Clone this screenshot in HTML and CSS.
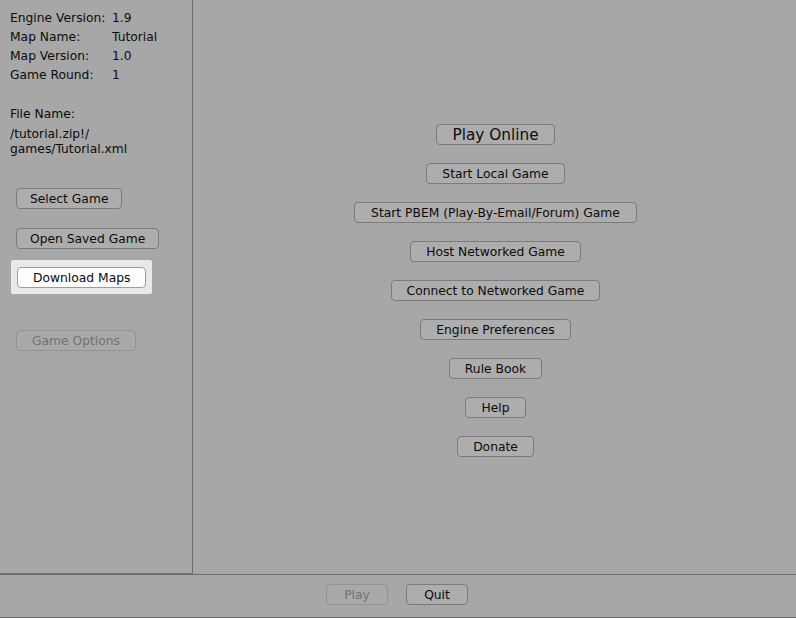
FILE: index.html
```html
<!DOCTYPE html>
<html>
<head>
<meta charset="utf-8">
<title>Game Launcher</title>
<link rel="stylesheet" href="styles.css">
</head>
<body>
<div class="window">
  <div class="top">
    <aside class="side">
      <div class="info">
        <span>Engine Version:</span><span>1.9</span>
        <span>Map Name:</span><span>Tutorial</span>
        <span>Map Version:</span><span>1.0</span>
        <span>Game Round:</span><span>1</span>
      </div>
      <div class="file-label">File Name:</div>
      <div class="file-path">/tutorial.zip!/<br>games/Tutorial.xml</div>
      <div class="side-buttons">
        <button class="btn btn-tight">Select Game</button>
        <button class="btn btn-tight">Open Saved Game</button>
        <div class="focus-ring"><button class="btn btn-default">Download Maps</button></div>
        <button class="btn btn-disabled">Game Options</button>
      </div>
    </aside>
    <main class="main">
      <button class="btn btn-large">Play Online</button>
      <button class="btn">Start Local Game</button>
      <button class="btn btn-wide">Start PBEM (Play-By-Email/Forum) Game</button>
      <button class="btn">Host Networked Game</button>
      <button class="btn">Connect to Networked Game</button>
      <button class="btn">Engine Preferences</button>
      <button class="btn">Rule Book</button>
      <button class="btn">Help</button>
      <button class="btn">Donate</button>
    </main>
  </div>
  <footer class="bottom">
    <button class="btn btn-fixed btn-disabled">Play</button>
    <button class="btn btn-fixed">Quit</button>
  </footer>
</div>
</body>
</html>
```
FILE: styles.css
```css
html, body {
  margin: 0;
  padding: 0;
  background: #a7a7a7;
}
body {
  font-family: "DejaVu Sans", "Liberation Sans", sans-serif;
  font-size: 12.3px;
  color: #0c0c0c;
  width: 796px;
  height: 618px;
  overflow: hidden;
}
.window {
  display: flex;
  flex-direction: column;
  height: 618px;
}
.top {
  display: flex;
  height: 575px;
}
.side {
  width: 192px;
  height: 573px;
  border-right: 1px solid #6c6c6c;
  border-bottom: 1px solid #6c6c6c;
  display: flex;
  flex-direction: column;
}
.info {
  display: grid;
  grid-template-columns: 102px auto;
  line-height: 19px;
  padding: 9px 0 0 10px;
}
.file-label {
  line-height: 19px;
  padding-left: 10px;
  margin-top: 20px;
}
.file-path {
  line-height: 15px;
  padding-left: 10px;
  margin-top: 3px;
}
.side-buttons {
  display: flex;
  flex-direction: column;
  align-items: flex-start;
  padding-left: 16px;
  margin-top: 31px;
}
.side-buttons > .btn {
  margin-bottom: 19px;
}
.side-buttons > .btn:nth-child(2) {
  margin-bottom: 18px;
}
.focus-ring {
  background: #e9e9e9;
  border-radius: 2px;
  padding: 7px 6px 6px;
  margin: -7px -5px 36px;
}
.btn {
  font-family: inherit;
  font-size: 12.3px;
  color: #0c0c0c;
  height: 21px;
  line-height: 18px;
  padding: 0 15px;
  background: #adadad;
  border: 1px solid #7b7b7b;
  border-radius: 4px;
  box-sizing: border-box;
  white-space: nowrap;
  margin: 0;
}
.btn-tight {
  padding: 0 13px;
}
.btn-wide {
  padding: 0 16px;
}
.btn-default {
  background: #fdfdfd;
  border-color: #9c9c9c;
}
.btn-disabled {
  color: #727272;
  background: #a9a9a9;
  border-color: #939393;
}
.btn-large {
  font-size: 15.3px;
}
.main {
  flex: 1;
  display: flex;
  flex-direction: column;
  align-items: center;
  gap: 18px;
  padding-top: 124px;
  padding-left: 2px;
}
.bottom {
  height: 40px;
  border-top: 1px solid #6c6c6c;
  border-bottom: 1px solid #6c6c6c;
  display: flex;
  justify-content: center;
  align-items: flex-start;
  gap: 18px;
  padding-top: 9px;
  padding-right: 2px;
  box-sizing: content-box;
}
.btn-fixed {
  width: 62px;
  padding: 0;
}
```
